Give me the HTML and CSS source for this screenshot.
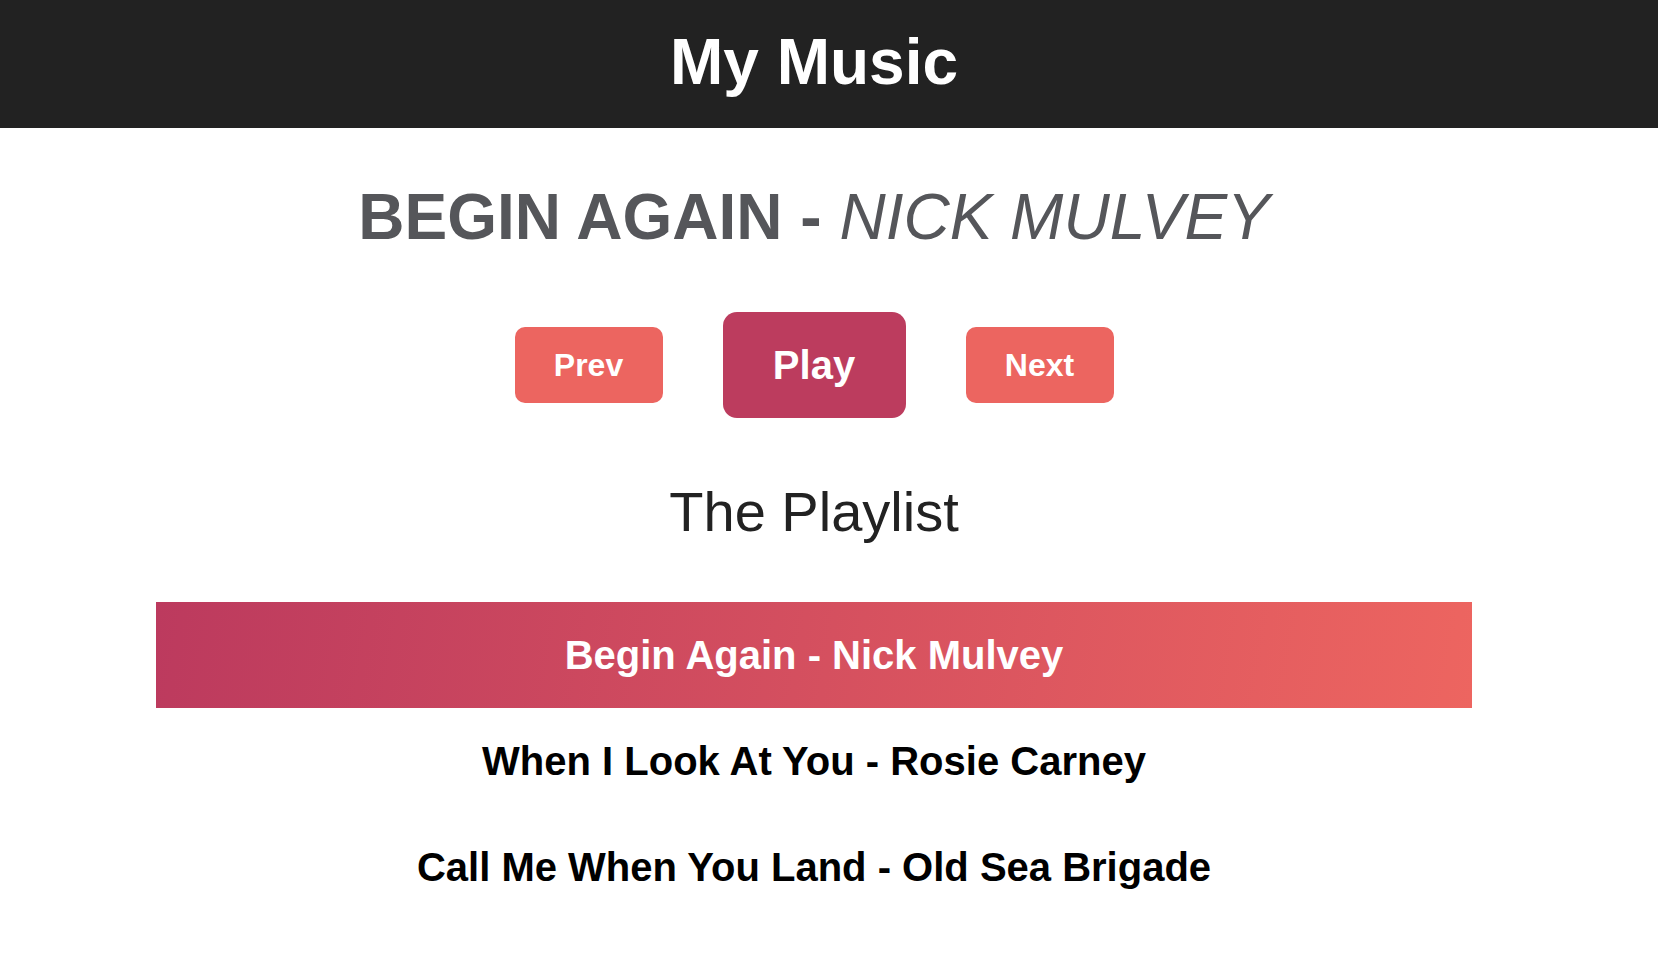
FILE: index.html
```html
<!DOCTYPE html>
<html lang="en">
<head>
<meta charset="utf-8">
<title>My Music</title>
<link rel="stylesheet" href="styles.css">
</head>
<body>
<header class="site-header">
  <h1 class="site-title">My Music</h1>
</header>
<main class="player">
  <h2 class="now-playing"><span class="np-song">BEGIN AGAIN - </span><span class="np-artist">NICK MULVEY</span></h2>
  <div class="controls">
    <button class="btn btn-small">Prev</button>
    <button class="btn btn-play">Play</button>
    <button class="btn btn-small">Next</button>
  </div>
  <h3 class="playlist-title">The Playlist</h3>
  <ul class="playlist">
    <li class="track active">Begin Again - Nick Mulvey</li>
    <li class="track">When I Look At You - Rosie Carney</li>
    <li class="track">Call Me When You Land - Old Sea Brigade</li>
  </ul>
</main>
</body>
</html>
```
FILE: styles.css
```css
html, body {
  margin: 0;
  padding: 0;
  background: #ffffff;
  font-family: "Liberation Sans", Arial, Helvetica, sans-serif;
}

.site-header {
  background: #222222;
  height: 128px;
  box-sizing: border-box;
  padding: 25px 30px 0 0;
}

.site-title {
  margin: 0;
  text-align: center;
  color: #ffffff;
  font-size: 64px;
  font-weight: bold;
  line-height: normal;
}

.player {
  margin-right: 30px;
  display: flex;
  flex-direction: column;
  align-items: center;
}

.now-playing {
  margin: 52px 0 0;
  font-size: 64px;
  font-weight: bold;
  line-height: normal;
  color: #55565a;
  text-align: center;
}

.np-artist {
  font-weight: normal;
  font-style: italic;
}

.controls {
  margin-top: 58px;
  display: flex;
  align-items: center;
  justify-content: center;
  gap: 60px;
}

.btn {
  border: none;
  color: #ffffff;
  font-family: "Liberation Sans", Arial, Helvetica, sans-serif;
  font-weight: bold;
  line-height: normal;
  cursor: pointer;
}

.btn-small {
  width: 148px;
  height: 76px;
  background: #ec6560;
  border-radius: 10px;
  font-size: 32px;
  padding: 0;
}

.btn-play {
  width: 183px;
  height: 106px;
  background: #bc3c5e;
  border-radius: 14px;
  font-size: 40px;
  padding: 0;
}

.playlist-title {
  margin: 61px 0 0;
  font-size: 56px;
  font-weight: normal;
  line-height: normal;
  color: #222222;
}

.playlist {
  list-style: none;
  margin: 58px 0 0;
  padding: 0;
  width: 1316px;
}

.track {
  padding: 30px 0;
  font-size: 40px;
  font-weight: bold;
  line-height: 46px;
  text-align: center;
  color: #000000;
}

.track.active {
  color: #ffffff;
  background: linear-gradient(100deg, #bc3a5e 0%, #ed6560 100%);
}
```
